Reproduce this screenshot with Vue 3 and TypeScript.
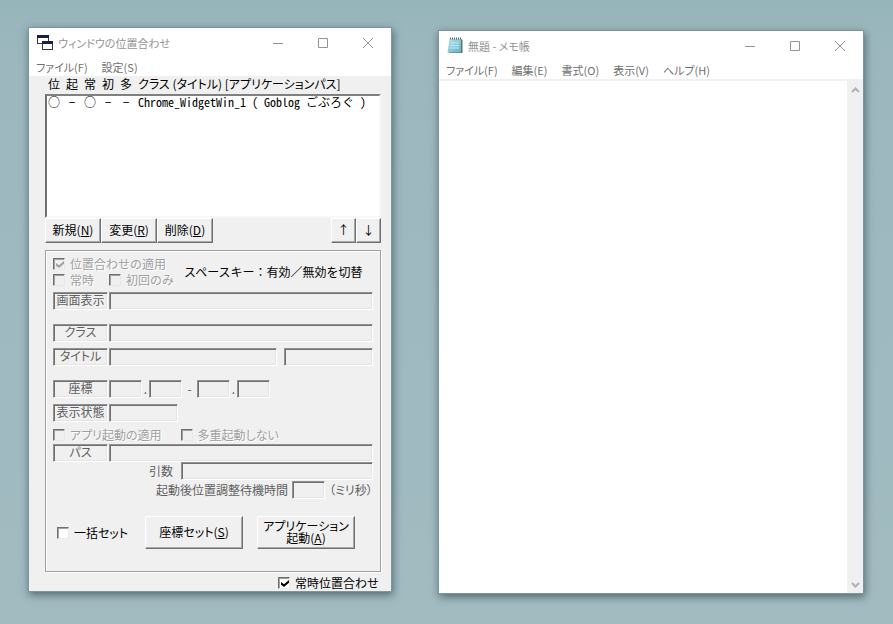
<script setup lang="ts">
import { ref } from 'vue'

interface MenuItem {
  label: string
  key: string
}

interface Entry {
  flags: string[]
  name: string
}

const toolMenus: MenuItem[] = [
  { label: 'ファイル', key: 'F' },
  { label: '設定', key: 'S' },
]
const padMenus: MenuItem[] = [
  { label: 'ファイル', key: 'F' },
  { label: '編集', key: 'E' },
  { label: '書式', key: 'O' },
  { label: '表示', key: 'V' },
  { label: 'ヘルプ', key: 'H' },
]
const editActions: MenuItem[] = [
  { label: '新規', key: 'N' },
  { label: '変更', key: 'R' },
  { label: '削除', key: 'D' },
]
const flagHeads: string[] = ['位', '起', '常', '初', '多']
const entries: Entry[] = [
  { flags: ['○', '−', '○', '−', '−'], name: 'Chrome_WidgetWin_1 ( Goblog ごぶろぐ )' },
]
const batchSet = ref(false)
const alwaysAlign = ref(true)
const note = ref('')
</script>

<template>
  <main class="desktop">
    <section class="window">
      <header class="titlebar">
        <svg class="app-icon" width="16" height="16" viewBox="0 0 16 16" aria-hidden="true">
          <rect x="0.5" y="0.5" width="11" height="8" fill="#fff" stroke="#34344c" />
          <rect x="0" y="0" width="12" height="3" fill="#1c1c48" />
          <rect x="5.5" y="6.5" width="10" height="8" fill="#fff" stroke="#34344c" />
          <rect x="5" y="6" width="11" height="3" fill="#1c1c48" />
        </svg>
        <h1 class="title">ウィンドウの位置合わせ</h1>
        <div class="caption">
          <button type="button" aria-label="最小化"><svg width="12" height="12" viewBox="0 0 12 12"><path d="M1 6.5h10" /></svg></button>
          <button type="button" aria-label="最大化"><svg width="12" height="12" viewBox="0 0 12 12"><path d="M1.5 1.5h9v9h-9z" /></svg></button>
          <button type="button" aria-label="閉じる"><svg width="12" height="12" viewBox="0 0 12 12"><path d="M1 1l10 10M11 1L1 11" /></svg></button>
        </div>
      </header>
      <nav class="menubar">
        <button v-for="m in toolMenus" :key="m.key" type="button">{{ m.label }}({{ m.key }})</button>
      </nav>

      <div class="dialog">
        <div class="list-head">
          <span v-for="h in flagHeads" :key="h" class="flag">{{ h }}</span>
          <span class="tight">クラス (タイトル) [アプリケーションパス]</span>
        </div>
        <ul class="listbox" role="listbox" aria-label="クラス" tabindex="0">
          <li v-for="(e, i) in entries" :key="i" role="option">
            <span v-for="(f, j) in e.flags" :key="j" class="flag">{{ f }}</span>
            <span class="mono">{{ e.name }}</span>
          </li>
        </ul>
        <div class="actions">
          <button v-for="a in editActions" :key="a.key" type="button" class="push edit">{{ a.label }}(<u>{{ a.key }}</u>)</button>
          <span class="fill"></span>
          <button type="button" class="push arrow">↑</button>
          <button type="button" class="push arrow">↓</button>
        </div>

        <form class="group" @submit.prevent>
          <div class="top">
            <div class="checks">
              <label class="check off"><input type="checkbox" checked disabled />位置合わせの適用</label>
              <div class="pair">
                <label class="check off"><input type="checkbox" disabled />常時</label>
                <label class="check off"><input type="checkbox" disabled />初回のみ</label>
              </div>
            </div>
            <p class="hint">スペースキー：有効／無効を切替</p>
          </div>

          <div class="row wide-gap">
            <label class="tag" for="screen">画面表示</label>
            <input id="screen" class="field fill" type="text" disabled />
          </div>
          <div class="row">
            <label class="tag tight" for="klass">クラス</label>
            <input id="klass" class="field fill" type="text" disabled />
          </div>
          <div class="row wide-gap">
            <label class="tag tight" for="wtitle">タイトル</label>
            <input id="wtitle" class="field grow-title" type="text" disabled />
            <input class="field grow-match" type="text" aria-label="タイトル" disabled />
          </div>
          <div class="row">
            <label class="tag" for="px">座標</label>
            <input id="px" class="field num" type="text" disabled />
            <span class="sep dot">.</span>
            <input class="field num" type="text" aria-label="座標" disabled />
            <span class="sep dash">-</span>
            <input class="field num" type="text" aria-label="座標" disabled />
            <span class="sep dot">.</span>
            <input class="field num" type="text" aria-label="座標" disabled />
          </div>
          <div class="row state">
            <label class="tag" for="state">表示状態</label>
            <input id="state" class="field mid" type="text" disabled />
          </div>
          <div class="pair launch">
            <label class="check off tight"><input type="checkbox" disabled />アプリ起動の適用</label>
            <label class="check off tight"><input type="checkbox" disabled />多重起動しない</label>
          </div>
          <div class="row snug">
            <label class="tag tight" for="path">パス</label>
            <input id="path" class="field fill" type="text" disabled />
          </div>
          <div class="row snug args">
            <label class="plain" for="args">引数</label>
            <input id="args" class="field fill" type="text" disabled />
          </div>
          <div class="row wait">
            <label class="plain" for="wait">起動後位置調整待機時間</label>
            <input id="wait" class="field num" type="text" disabled />
            <span class="plain tight unit">（ミリ秒）</span>
          </div>

          <div class="bottom">
            <label class="check tight"><input v-model="batchSet" type="checkbox" />一括セット</label>
            <button type="button" class="push big">座標セット(<u>S</u>)</button>
            <button type="button" class="push big">アプリケーション<br />起動(<u>A</u>)</button>
          </div>
        </form>

        <label class="check always"><input v-model="alwaysAlign" type="checkbox" />常時位置合わせ</label>
      </div>
    </section>

    <section class="window notepad">
      <header class="titlebar">
        <svg class="app-icon" width="16" height="17" viewBox="0 0 16 17" aria-hidden="true">
          <defs>
            <linearGradient id="pad" x1="0" y1="0" x2="1" y2="1">
              <stop offset="0" stop-color="#b9e4ee" />
              <stop offset="1" stop-color="#5fb0c6" />
            </linearGradient>
          </defs>
          <path d="M14 2l1.500 1v13H2v-1z" fill="#5d7568" />
          <path d="M2.500 2H14v13.500H.5z" fill="url(#pad)" />
          <path d="M4 6h8M3.500 8.500H12M3 11h9" stroke="#c6e8ef" stroke-width="1" />
          <path d="M3.500 .5v2M5.500 .5v2M7.500 .5v2M9.500 .5v2M11.500 .5v2M13.500 .5v2" stroke="#4c6468" stroke-width="1" />
        </svg>
        <h1 class="title">無題 - メモ帳</h1>
        <div class="caption">
          <button type="button" aria-label="最小化"><svg width="12" height="12" viewBox="0 0 12 12"><path d="M1 6.5h10" /></svg></button>
          <button type="button" aria-label="最大化"><svg width="12" height="12" viewBox="0 0 12 12"><path d="M1.5 1.5h9v9h-9z" /></svg></button>
          <button type="button" aria-label="閉じる"><svg width="12" height="12" viewBox="0 0 12 12"><path d="M1 1l10 10M11 1L1 11" /></svg></button>
        </div>
      </header>
      <nav class="menubar">
        <button v-for="m in padMenus" :key="m.key" type="button">{{ m.label }}({{ m.key }})</button>
      </nav>
      <div class="editor">
        <textarea v-model="note" aria-label="テキスト エディター"></textarea>
        <div class="scroll">
          <svg width="9" height="6" viewBox="0 0 9 6"><path d="M1 5l3.500-3.500L8 5" /></svg>
          <svg width="9" height="6" viewBox="0 0 9 6"><path d="M1 1l3.500 3.500L8 1" /></svg>
        </div>
      </div>
    </section>
  </main>
</template>

<style>
body {
  background: #9cb8be;
}
</style>

<style scoped>
* {
  box-sizing: border-box;
}
.desktop {
  min-height: 100vh;
  padding: 27px 29px 32px 28px;
  display: grid;
  grid-template-columns: minmax(364px, 364fr) 426fr;
  gap: 46px;
  background: linear-gradient(#96b5bb, #9cb8be 10%, #a1bbc1);
  font-family: "Noto Sans CJK JP", "Liberation Sans", sans-serif;
  font-size: 12px;
  line-height: 16px;
  color: #000;
}
button,
input,
textarea {
  font: inherit;
  color: inherit;
  margin: 0;
}
.window {
  display: flex;
  flex-direction: column;
  min-width: 0;
  background: #fff;
  border: 1px solid #7d969b;
  box-shadow: 1px 3px 8px rgba(30, 55, 62, 0.6);
}
.notepad {
  margin-top: 3px;
  margin-bottom: -2px;
}
.titlebar {
  display: flex;
  align-items: center;
  height: 29px;
  padding: 0 1px 0 8px;
}
.app-icon {
  flex: none;
}
.title {
  flex: 1;
  margin: 0 0 0 5px;
  font-size: 11px;
  font-weight: 400;
  color: #949494;
  font-feature-settings: "palt";
  white-space: nowrap;
}
.caption {
  display: flex;
}
.caption button {
  width: 45px;
  height: 28px;
  padding: 0;
  border: 0;
  background: none;
  display: grid;
  place-items: center;
}
.caption svg {
  fill: none;
  stroke: #949494;
}
.menubar {
  display: flex;
  gap: 14px;
  height: 19px;
  padding: 1px 7px 0;
  font-size: 11px;
}
.menubar button {
  padding: 0;
  border: 0;
  background: none;
  color: #707070;
  font-feature-settings: "palt";
  white-space: nowrap;
}
.dialog {
  flex: 1;
  background: #f0f0f0;
  padding: 0 10px 0 16px;
}
.tight {
  font-feature-settings: "palt";
}
.mono {
  font-feature-settings: "hwid";
  white-space: pre;
}
.list-head {
  display: flex;
  height: 18px;
  padding-left: 3px;
  white-space: nowrap;
}
.flag {
  flex: none;
  width: 12px;
  margin-right: 6px;
  text-align: center;
}
.listbox {
  height: 124px;
  margin: 0;
  padding: 0 1px;
  list-style: none;
  background: #fff;
  border: 2px solid;
  border-color: #808080 #f8f8f8 #f8f8f8 #707070;
}
.listbox li {
  display: flex;
  height: 12px;
  line-height: 12px;
}
.actions {
  display: flex;
}
.fill {
  flex: 1;
  min-width: 0;
}
.push {
  padding: 0 0 2px;
  background: #f0f0f0;
  border: 1px solid;
  border-color: #fff #707070 #707070 #fff;
  box-shadow: inset -1px -1px #a8a8a8;
  font-feature-settings: "palt";
}
.edit {
  width: 56px;
  height: 25px;
}
.arrow {
  width: 25px;
  height: 25px;
}
.group {
  display: flex;
  flex-direction: column;
  margin-top: 7px;
  padding: 5px 7px 22px;
  border: 1px solid #a0a0a0;
  box-shadow: inset 1px 1px #fff, 1px 1px #fff;
}
.top {
  display: flex;
  align-items: center;
  gap: 10px;
}
.checks {
  display: flex;
  flex-direction: column;
}
.pair {
  display: flex;
  gap: 15px;
}
.check {
  display: flex;
  align-items: center;
  gap: 5px;
  height: 16px;
  white-space: nowrap;
}
.check input {
  appearance: none;
  position: relative;
  width: 12px;
  height: 12px;
  background: #fff;
  border: 1px solid;
  border-color: #707070 #e8e8e8 #e8e8e8 #707070;
  box-shadow: inset 1px 1px #a0a0a0;
}
.check input:disabled {
  background: #f0f0f0;
}
.check input:checked::after {
  content: "";
  position: absolute;
  left: 2px;
  top: 2px;
  width: 8px;
  height: 7px;
  background: #000;
  clip-path: polygon(0 30%, 38% 62%, 100% 0, 100% 40%, 38% 100%, 0 68%);
}
.check input:disabled:checked::after {
  background: #a0a0a0;
}
.off {
  color: #a0a0a0;
  text-shadow: 1px 1px #fff;
}
.hint {
  margin: 0;
  white-space: nowrap;
}
.row {
  display: flex;
  align-items: center;
  height: 18px;
  margin-bottom: 6px;
}
.top + .row {
  margin-top: 4px;
}
.wide-gap {
  margin-bottom: 14px;
}
.tag,
.field {
  height: 18px;
  border: 1px solid;
  border-color: #909090 #fff #fff #909090;
  background: #f0f0f0;
  box-shadow: inset 1px 1px #707070, inset -1px -1px #e4e4e4;
}
.tag {
  flex: none;
  width: 55px;
  margin-right: 1px;
  color: #606060;
  line-height: 14px;
  text-align: center;
  white-space: nowrap;
}
.field {
  min-width: 0;
  padding: 0;
  border-radius: 0;
}
.grow-title {
  flex: 169;
}
.grow-match {
  flex: 88;
  margin-left: 7px;
}
.num {
  flex: none;
  width: 33px;
}
.mid {
  width: 69px;
}
.sep {
  flex: none;
  color: #606060;
  text-align: center;
}
.dot {
  width: 7px;
}
.dash {
  width: 15px;
}
.state {
  margin-bottom: 5px;
}
.launch {
  gap: 19px;
  margin-bottom: 1px;
}
.snug {
  margin-bottom: 0;
}
.plain {
  color: #606060;
  white-space: nowrap;
}
.args {
  gap: 8px;
  padding-left: 96px;
}
.wait {
  gap: 4px;
  padding-left: 103px;
  margin: 1px 0 0;
}
.unit {
  flex: none;
}
.bottom {
  display: flex;
  align-items: center;
  gap: 14px;
  margin-top: 17px;
  padding-left: 4px;
}
.bottom .check {
  width: 74px;
}
.big {
  width: 98px;
  height: 33px;
  line-height: 12px;
}
.always {
  justify-content: flex-end;
  margin: 3px 2px 0 0;
}
.editor {
  flex: 1;
  display: flex;
  border-top: 2px solid #f0f0f0;
}
.editor textarea {
  flex: 1;
  min-width: 0;
  padding: 2px 4px;
  border: 0;
  outline: 0;
  resize: none;
  background: #fff;
}
.scroll {
  display: flex;
  flex-direction: column;
  align-items: center;
  justify-content: space-between;
  width: 16px;
  padding: 6px 0 5px;
  background: #f0f0f0;
}
.scroll svg {
  fill: none;
  stroke: #b0b0b0;
  stroke-width: 2;
}
</style>
